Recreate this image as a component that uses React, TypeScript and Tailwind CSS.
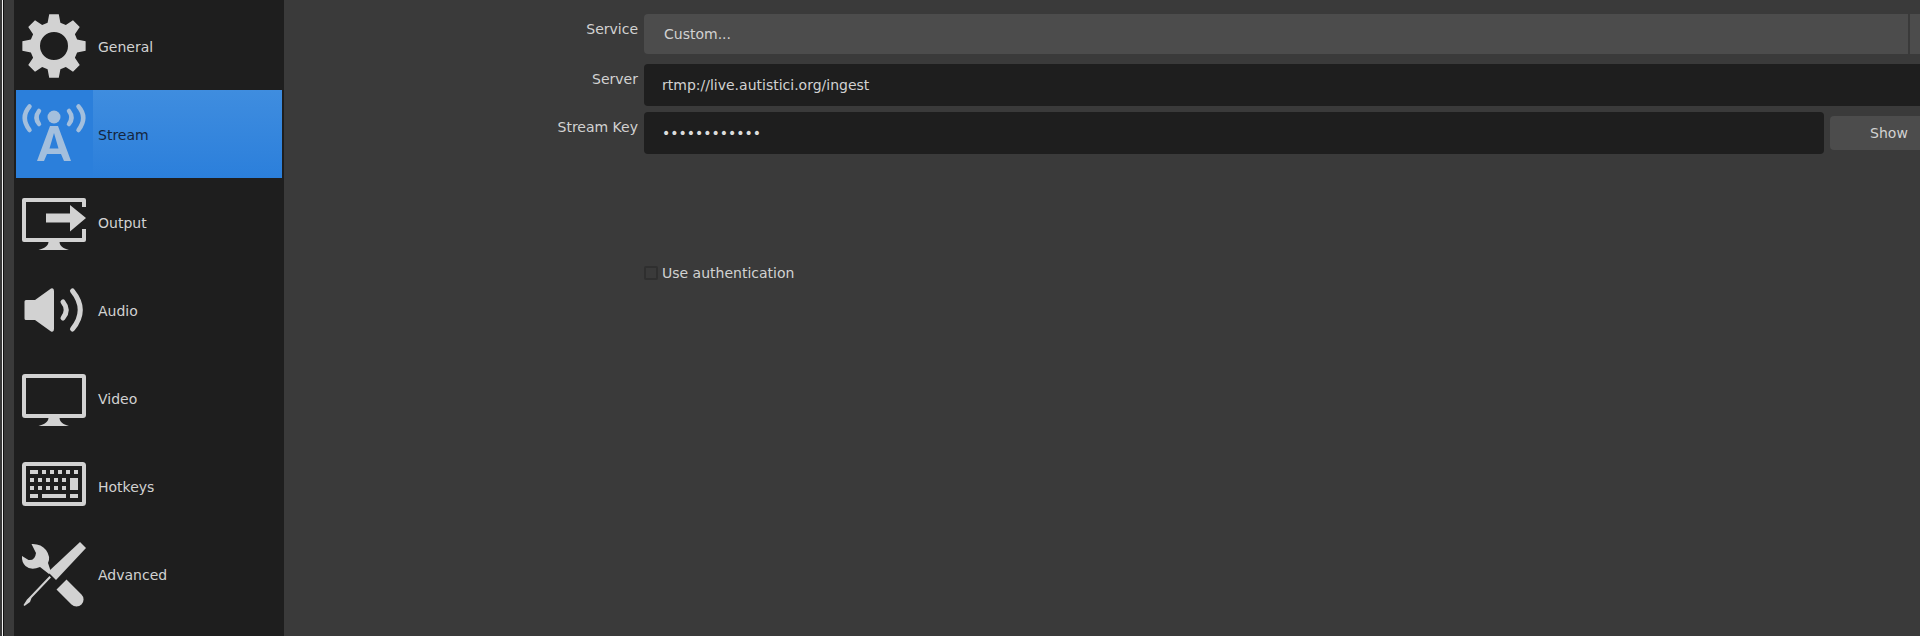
import React from "react";

function gearPath() {
  const c = 32;
  const pts: string[] = [];
  const pol = (r: number, a: number) => `${(c + r * Math.sin(a)).toFixed(2)} ${(c - r * Math.cos(a)).toFixed(2)}`;
  for (let i = 0; i < 8; i++) {
    const a = (i * Math.PI) / 4;
    const tip = 0.15;
    const root = 0.27;
    pts.push(pol(24, a - root), pol(32, a - tip), pol(32, a + tip), pol(24, a + root));
  }
  const hole = "M32 18a14 14 0 1 0 0 28a14 14 0 1 0 0-28Z";
  return `M${pts.join("L")}Z${hole}`;
}

const Icon = ({ children, color = "#d2d2d2" }: { children: React.ReactNode; color?: string }) => (
  <svg width="64" height="64" viewBox="0 0 64 64" fill={color} className="block overflow-visible">
    {children}
  </svg>
);

const Stand = () => <path d="M26.500 52h11c.5 4 3 6 9.500 8h-30.500c6.500-2 9.500-4 10-8Z" />;

const Gear = () => (
  <Icon>
    <path d={gearPath()} fillRule="evenodd" />
  </Icon>
);

const Tower = () => (
  <Icon color="#a3bfdd">
    <circle cx="32" cy="15" r="6.500" />
    <g fill="none" stroke="#a3bfdd" strokeWidth="4.500" strokeLinecap="round">
      <path d="M7.500 4.500Q-2 15.500 7.500 28" />
      <path d="M56.500 4.500Q66 15.500 56.500 28" />
      <path d="M17 9Q12 15.500 17 22" />
      <path d="M47 9Q52 15.500 47 22" />
    </g>
    <path fillRule="evenodd" d="M28 24H36L49 59H42L39 52H25L22 59H15ZM32 31L27.500 46.500H36.500Z" />
  </Icon>
);

const OutputIcon = () => (
  <Icon>
    <path d="M62 17V10H2V50H62V39" fill="none" stroke="#d2d2d2" strokeWidth="4" strokeLinejoin="round" />
    <path d="M24 23.500H48V15L64 28L48 41.500V32.500H24Z" />
    <Stand />
  </Icon>
);

const Speaker = () => (
  <Icon>
    <path d="M4 22H13L29 10.500Q32 9.500 32 13V51Q32 54.500 29 53.500L13 42H4Q2.500 42 2.500 40.500V23.500Q2.500 22 4 22Z" />
    <g fill="none" stroke="#d2d2d2" strokeWidth="5" strokeLinecap="round">
      <path d="M41 24Q47.500 32 41 40" />
      <path d="M50.500 13Q66 32 50.500 51" />
    </g>
  </Icon>
);

const Monitor = () => (
  <Icon>
    <rect x="2" y="10" width="60" height="40" rx="1" fill="none" stroke="#d2d2d2" strokeWidth="4" />
    <Stand />
  </Icon>
);

const keys = [
  [8, 16, 8, 4], [20, 16, 4, 4], [28, 16, 4, 4], [36, 16, 4, 4], [44, 16, 4, 4], [52, 16, 4, 4],
  [8, 24, 4, 4], [16, 24, 4, 4], [24, 24, 4, 4], [32, 24, 4, 4], [40, 24, 4, 4], [48, 24, 8, 12],
  [8, 32, 4, 4], [16, 32, 4, 4], [24, 32, 4, 4], [32, 32, 4, 4], [40, 32, 4, 4],
  [8, 40, 8, 4], [20, 40, 24, 4], [48, 40, 8, 4],
];

const Keyboard = () => (
  <Icon>
    <rect x="2" y="10" width="60" height="40" rx="1.500" fill="none" stroke="#d2d2d2" strokeWidth="4" />
    {keys.map(([x, y, w, h], i) => (
      <rect key={i} x={x} y={y} width={w} height={h} />
    ))}
  </Icon>
);

const Tools = () => (
  <Icon>
    <path d="M9.500 2Q19 1.500 24 8Q29 15 26 21L29 30L27 32L18 25Q9 29 3.500 24Q-.5 20 0 14L6.500 18Q13 19 14 11Z" />
    <path d="M58 0L64 6L34 38L26 30Z" />
    <path d="M27.500 34L29 35.500L9.500 56L8 60L2.500 64L1.500 63L5 57.500L8 54.500Z" />
    <path d="M44.500 37.500L59.500 52.500A7 7 0 0 1 49.500 62.500L34.500 47.500Z" />
  </Icon>
);

const items: { label: string; icon: React.ReactNode; active?: boolean }[] = [
  { label: "General", icon: <Gear /> },
  { label: "Stream", icon: <Tower />, active: true },
  { label: "Output", icon: <OutputIcon /> },
  { label: "Audio", icon: <Speaker /> },
  { label: "Video", icon: <Monitor /> },
  { label: "Hotkeys", icon: <Keyboard /> },
  { label: "Advanced", icon: <Tools /> },
];

export default function App() {
  return (
    <div className="flex h-[636px] w-[1920px] overflow-hidden bg-[#3a3a3a] font-['DejaVu_Sans',sans-serif] text-[14px] text-[#d2d2d2]">
      <div className="w-[2px] bg-[#3a3a3a]" />
      <div className="w-[1px] bg-[#f2f2f2]" />
      <div className="w-[1px] bg-[#111111]" />
      <div className="w-[10px] bg-[#3a3a3a]" />
      <nav className="w-[270px] shrink-0 bg-[#1e1e1e] px-[2px] pt-[2px]">
        {items.map((it) => (
          <div
            key={it.label}
            className={
              it.active
                ? "flex h-[88px] items-center bg-gradient-to-b from-[#3f8ddf] to-[#2b7fdb] text-[#14253f]"
                : "flex h-[88px] items-center"
            }
          >
            <div
              className={
                it.active
                  ? "flex h-full w-[77px] items-center bg-[#2b7fdb] pl-[6px]"
                  : "flex h-full w-[77px] items-center pl-[6px]"
              }
            >
              {it.icon}
            </div>
            <span className="pl-[5px] pt-[2px] leading-[20px]">{it.label}</span>
          </div>
        ))}
      </nav>
      <main className="min-w-0 flex-1 overflow-hidden">
        <div className="grid w-[1664px] grid-cols-[354px_1fr] gap-x-[6px] pt-[14px] leading-[20px]">
          <div className="pt-[5px] text-right">Service</div>
          <div className="flex h-[40px] items-center rounded-[4px] bg-[#4c4c4c]">
            <span className="flex-1 pl-[20px]">Custom...</span>
            <div className="h-full w-[40px] border-l-2 border-[#3a3a3a]" />
          </div>

          <div className="mt-[10px] pt-[5px] text-right">Server</div>
          <div className="mt-[10px] flex h-[42px] items-center rounded-[4px] bg-[#1e1e1e] pl-[18px]">
            rtmp://live.autistici.org/ingest
          </div>

          <div className="mt-[6px] pt-[5px] text-right">Stream Key</div>
          <div className="mt-[6px] flex h-[42px] items-center gap-[6px]">
            <div className="flex h-full flex-1 items-center rounded-[4px] bg-[#1e1e1e] pl-[18px] text-[#dcdcdc]">
              ••••••••••••
            </div>
            <div className="flex h-[34px] w-[118px] items-center justify-center rounded-[4px] bg-[#4c4c4c]">
              Show
            </div>
          </div>

          <div />
          <div className="mt-[109px] flex items-center gap-[4px]">
            <div className="h-[14px] w-[14px] rounded-[2px] border-2 border-[#2f2f2f] bg-[#3a3a3a]" />
            <span>Use authentication</span>
          </div>
        </div>
      </main>
    </div>
  );
}
